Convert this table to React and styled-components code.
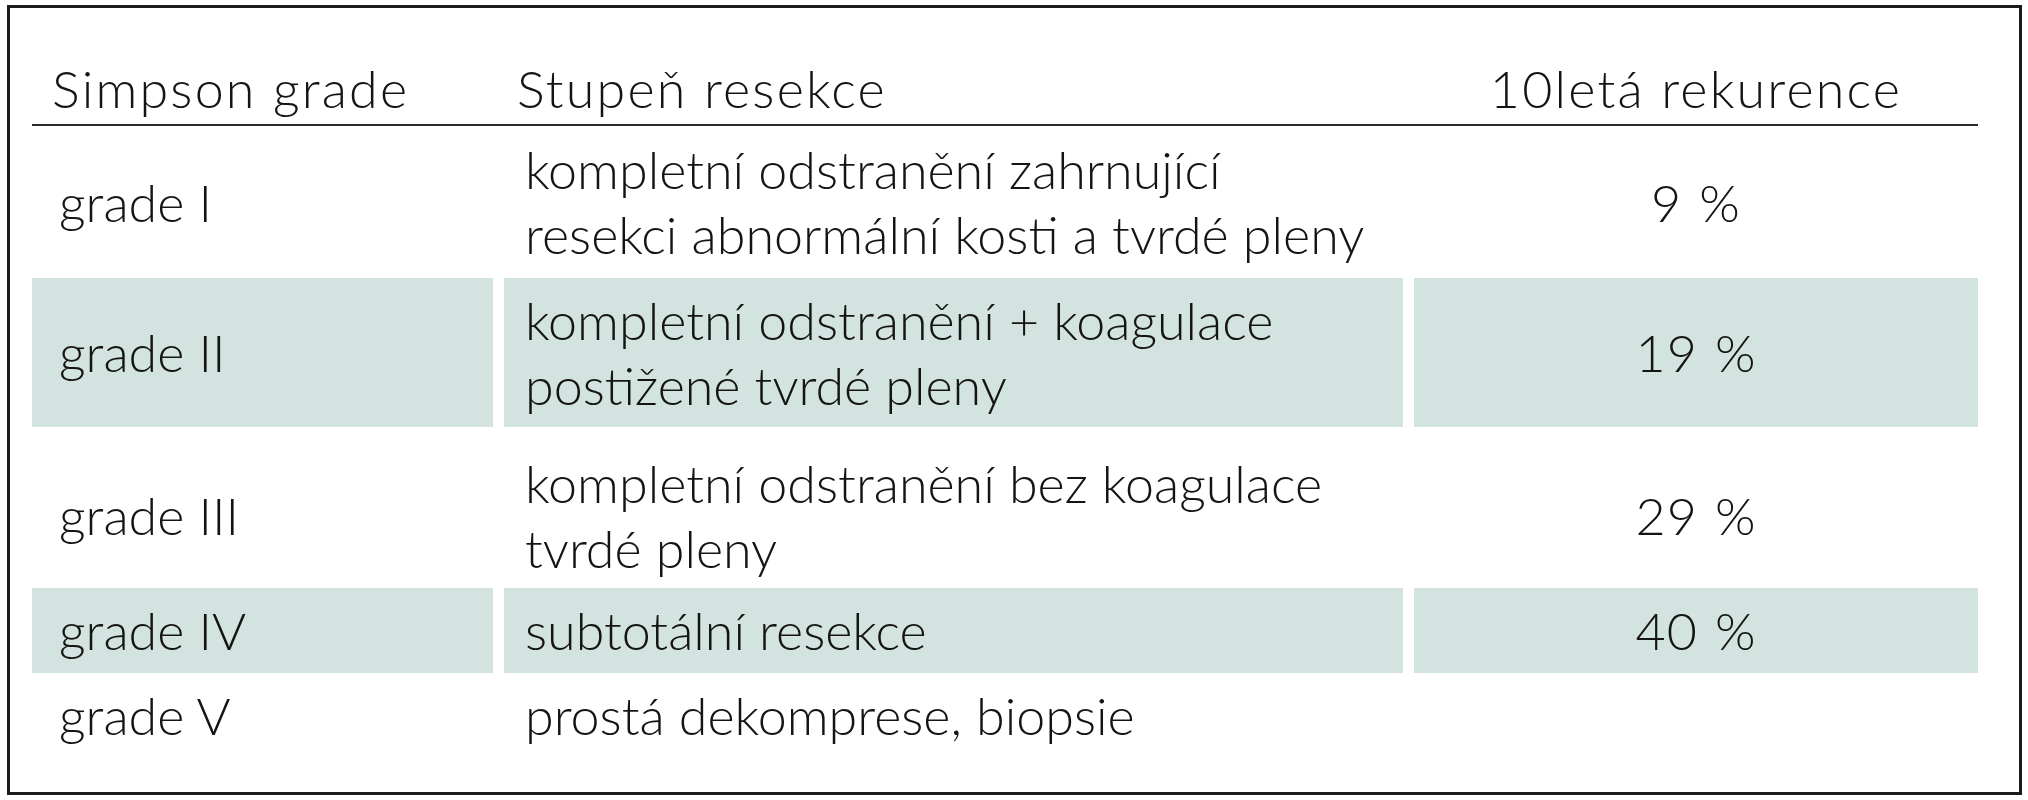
import React from "react";
import styled, { createGlobalStyle } from "styled-components";

const GlobalStyle = createGlobalStyle`
  html, body {
    margin: 0;
    padding: 0;
    background: #ffffff;
  }
  body {
    font-family: Lato, "Open Sans", "DejaVu Sans", sans-serif;
    color: #141414;
  }
`;

const columns = "461px 899px 564px";

const Frame = styled.div`
  box-sizing: border-box;
  width: 2015px;
  height: 790px;
  margin: 5px 0 0 7px;
  border: 3px solid #1b1b1b;
  padding-left: 22px;
`;

const Table = styled.div`
  width: 1946px;
`;

const HeaderRow = styled.div`
  box-sizing: border-box;
  display: grid;
  grid-template-columns: ${columns};
  column-gap: 11px;
  align-items: last baseline;
  height: 118px;
  border-bottom: 2px solid #2b2b2b;
`;

const HeaderCell = styled.div`
  font-size: 52px;
  font-weight: 300;
  line-height: 62px;
  letter-spacing: 2.2px;
  padding: 0 0 5px ${props => props.$inset}px;
  text-align: ${props => (props.$center ? "center" : "left")};
`;

const Row = styled.div`
  box-sizing: border-box;
  display: grid;
  grid-template-columns: ${columns};
  column-gap: 11px;
  height: ${props => props.$height}px;
  padding-top: ${props => props.$shift || 0}px;
`;

const Cell = styled.div`
  display: flex;
  flex-direction: column;
  justify-content: center;
  align-items: ${props => (props.$center ? "center" : "flex-start")};
  padding-left: ${props => props.$inset}px;
  background: ${props => (props.$shaded ? "#d3e3df" : "transparent")};
  font-size: 52px;
  font-weight: 300;
  line-height: 65px;
  white-space: nowrap;
`;

const Rate = styled.span`
  word-spacing: 2px;
  letter-spacing: 1px;
`;

const rows = [
  {
    grade: "grade I",
    lines: ["kompletní odstranění zahrnující", "resekci abnormální kosti a tvrdé pleny"],
    rate: "9 %",
    height: 152,
  },
  {
    grade: "grade II",
    lines: ["kompletní odstranění + koagulace", "postižené tvrdé pleny"],
    rate: "19 %",
    height: 149,
    shaded: true,
  },
  {
    grade: "grade III",
    lines: ["kompletní odstranění bez koagulace", "tvrdé pleny"],
    rate: "29 %",
    height: 161,
    shift: 16,
  },
  {
    grade: "grade IV",
    lines: ["subtotální resekce"],
    rate: "40 %",
    height: 85,
    shaded: true,
  },
  {
    grade: "grade V",
    lines: ["prostá dekomprese, biopsie"],
    rate: "",
    height: 85,
  },
];

export default function App() {
  return (
    <>
      <GlobalStyle />
      <Frame>
        <Table>
          <HeaderRow>
            <HeaderCell $inset={20}>Simpson grade</HeaderCell>
            <HeaderCell $inset={13}>Stupeň resekce</HeaderCell>
            <HeaderCell $center>10letá rekurence</HeaderCell>
          </HeaderRow>
          {rows.map(row => (
            <Row key={row.grade} $height={row.height} $shift={row.shift}>
              <Cell $inset={27} $shaded={row.shaded}>
                {row.grade}
              </Cell>
              <Cell $inset={21} $shaded={row.shaded}>
                {row.lines.map(line => (
                  <span key={line}>{line}</span>
                ))}
              </Cell>
              <Cell $center $shaded={row.shaded}>
                <Rate>{row.rate}</Rate>
              </Cell>
            </Row>
          ))}
        </Table>
      </Frame>
    </>
  );
}
